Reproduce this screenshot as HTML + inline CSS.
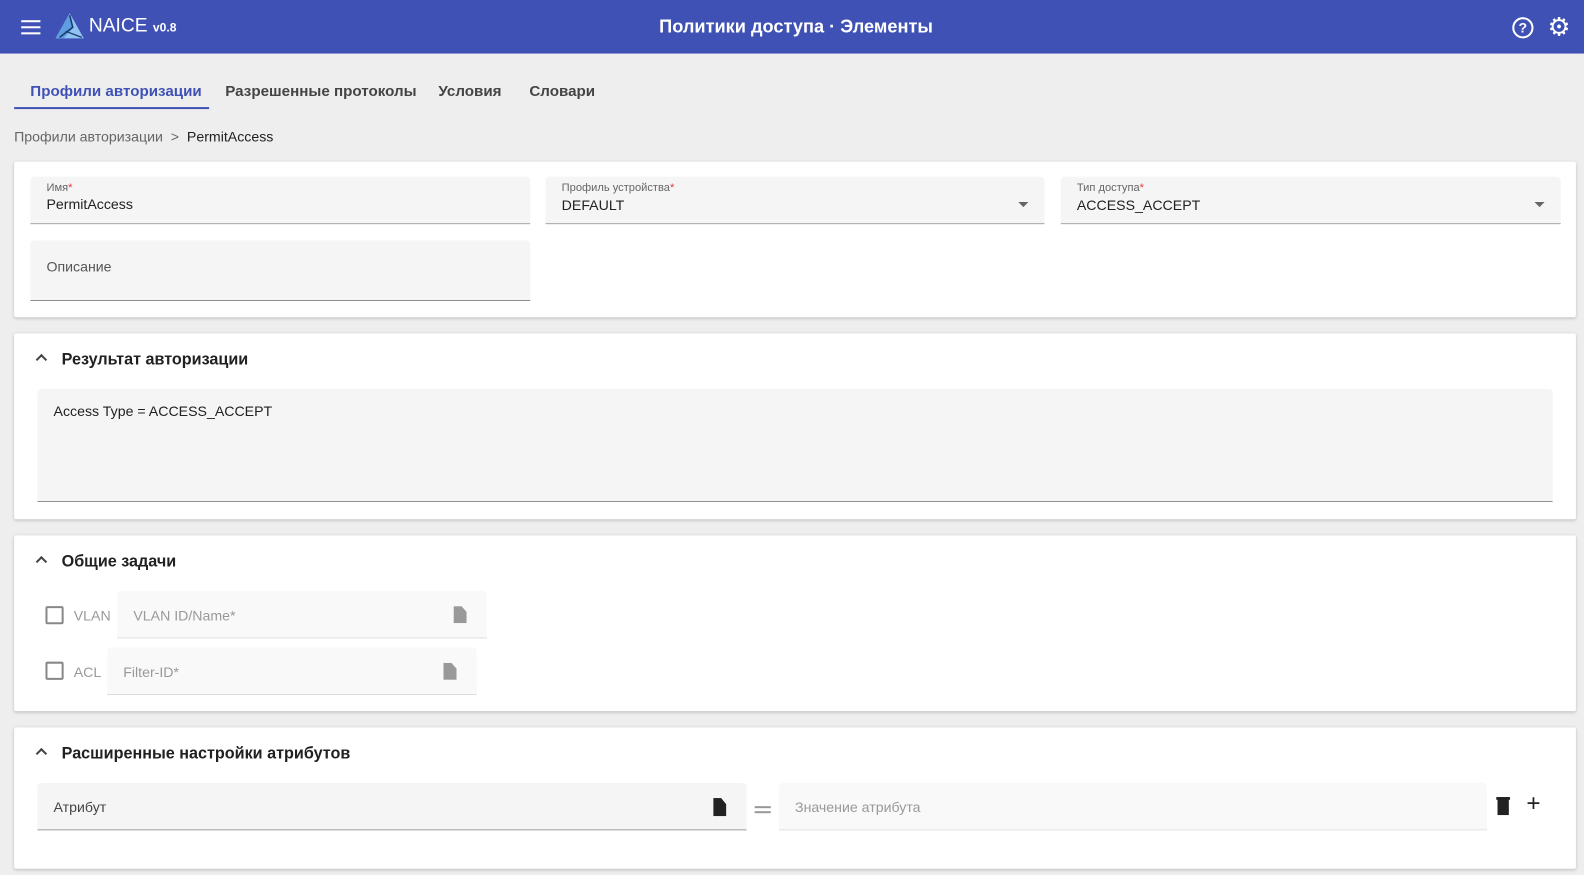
<!DOCTYPE html>
<html><head><meta charset="utf-8"><style>
*{box-sizing:border-box;margin:0;padding:0}
body{width:1584px;height:874px;overflow:hidden;background:#eeeeee;font-family:"Liberation Sans","Noto Sans CJK SC",sans-serif;color:#212121;position:relative;font-size:14px}
#w{position:absolute;left:0;top:0;width:1568px;height:866px;transform:scale(1.0102);transform-origin:0 0}
.abs{position:absolute}
.hdr{left:0;top:0;width:1568px;height:53px;background:#3f51b5;color:#fff}
.card{position:absolute;left:14px;width:1546px;background:#fff;box-shadow:0 1px 3px rgba(0,0,0,.2);border-radius:2px}
.fld{position:absolute;background:#f5f5f5;border-bottom:1px solid #8a8a8a;border-radius:4px 4px 0 0}
.lbl{position:absolute;font-size:11px;color:#666}
.req{color:#e53935}
.val{position:absolute;font-size:14px;color:#212121}
.arrow{position:absolute;width:0;height:0;border-left:5px solid transparent;border-right:5px solid transparent;border-top:5px solid #666}
.ttl{position:absolute;left:47px;font-size:16px;font-weight:bold;color:#212121}
.chev{position:absolute;left:23px;width:8px;height:8px;border-left:2px solid #444;border-top:2px solid #444;transform:rotate(45deg)}
.cb{position:absolute;width:18px;height:18px;border:2px solid #888;border-radius:2px}
.ph{position:absolute;color:#999;font-size:14px}
.tab{position:absolute;top:82px;font-size:15px;color:#444;font-weight:bold}
.doc{position:absolute;width:13px;height:17px;clip-path:polygon(0 0,60% 0,100% 35%,100% 100%,0 100%)}
</style></head><body><div id="w">
<div class="abs hdr">
 <div class="abs" style="left:21px;top:20px;width:19px;height:2px;background:#fff;box-shadow:0 6px 0 #fff,0 12px 0 #fff"></div>
 <svg class="abs" style="left:55px;top:13px" width="29" height="26" viewBox="0 0 29 26"><polygon points="14,0 28,25 0,25" fill="#8ec3f2"/><polygon points="14,0 18,14 8,25 0,25" fill="#5e9ee0"/><polyline points="14,2 17,14 4,24" stroke="#1e3a6e" stroke-width="1.5" fill="none"/><polyline points="10,18 26,24" stroke="#1e3a6e" stroke-width="1.2" fill="none"/></svg>
 <div class="abs" style="left:88px;top:15px;font-size:19px">NAICE <span style="font-size:12px;font-weight:bold">v0.8</span></div>
 <div class="abs" style="left:0;width:1576px;text-align:center;top:16px;font-size:18px;font-weight:bold">Политики доступа · Элементы</div>
 <div class="abs" style="left:1497px;top:17px;width:21px;height:21px;border:2px solid #fff;border-radius:50%;text-align:center;font-size:14px;font-weight:bold;line-height:17px">?</div>
 <div class="abs" style="left:1532px;top:15px;font-size:25px;line-height:25px">⚙</div>
</div>
<div class="tab" style="left:30px;color:#3f51b5">Профили авторизации</div>
<div class="abs" style="left:14px;top:106px;width:193px;height:2px;background:#3f51b5"></div>
<div class="tab" style="left:223px">Разрешенные протоколы</div>
<div class="tab" style="left:434px">Условия</div>
<div class="tab" style="left:524px">Словари</div>
<div class="abs" style="left:14px;top:127px;font-size:14px;color:#666">Профили авторизации &nbsp;&gt;&nbsp; <span style="color:#212121">PermitAccess</span></div>

<div class="card" style="top:160px;height:154px">
 <div class="fld" style="left:16px;top:15px;width:495px;height:47px"><div class="lbl" style="left:16px;top:5px">Имя<span class="req">*</span></div><div class="val" style="left:16px;top:19px">PermitAccess</div></div>
 <div class="fld" style="left:526px;top:15px;width:494px;height:47px"><div class="lbl" style="left:16px;top:5px">Профиль устройства<span class="req">*</span></div><div class="val" style="left:16px;top:20px">DEFAULT</div><div class="arrow" style="left:468px;top:25px"></div></div>
 <div class="fld" style="left:1036px;top:15px;width:495px;height:47px"><div class="lbl" style="left:16px;top:5px">Тип доступа<span class="req">*</span></div><div class="val" style="left:16px;top:20px">ACCESS_ACCEPT</div><div class="arrow" style="left:469px;top:25px"></div></div>
 <div class="fld" style="left:16px;top:78px;width:495px;height:60px"><div class="val" style="left:16px;top:18px;color:#555">Описание</div></div>
</div>

<div class="card" style="top:330px;height:184px">
 <div class="chev" style="top:22px"></div>
 <div class="ttl" style="top:18px">Результат авторизации</div>
 <div class="fld" style="left:23px;top:55px;width:1500px;height:112px"><div class="val" style="left:16px;top:14px">Access Type = ACCESS_ACCEPT</div></div>
</div>

<div class="card" style="top:530px;height:174px">
 <div class="chev" style="top:22px"></div>
 <div class="ttl" style="top:18px">Общие задачи</div>
 <div class="cb" style="left:31px;top:70px"></div><div class="ph" style="left:59px;top:71px">VLAN</div>
 <div class="fld" style="left:102px;top:55px;width:366px;height:47px;background:#f9f9f9;border-bottom-color:#ddd"><div class="ph" style="left:16px;top:16px">VLAN ID/Name*</div><div class="doc" style="left:333px;top:15px;background:#999"></div></div>
 <div class="cb" style="left:31px;top:125px"></div><div class="ph" style="left:59px;top:127px">ACL</div>
 <div class="fld" style="left:92px;top:111px;width:366px;height:47px;background:#f9f9f9;border-bottom-color:#ddd"><div class="ph" style="left:16px;top:16px">Filter-ID*</div><div class="doc" style="left:333px;top:15px;background:#999"></div></div>
</div>

<div class="card" style="top:720px;height:140px">
 <div class="chev" style="top:22px"></div>
 <div class="ttl" style="top:18px">Расширенные настройки атрибутов</div>
 <div class="fld" style="left:23px;top:55px;width:702px;height:47px"><div class="val" style="left:16px;top:16px;color:#444">Атрибут</div><div class="doc" style="left:669px;top:15px;background:#222;height:18px"></div></div>
 <div class="abs" style="left:733px;top:78px;width:16px;height:2px;background:#999;box-shadow:0 5px 0 #999"></div>
 <div class="fld" style="left:757px;top:55px;width:701px;height:47px;background:#f9f9f9;border-bottom-color:#ddd"><div class="ph" style="left:16px;top:16px">Значение атрибута</div></div>
 <div class="abs" style="left:1467px;top:69px;width:14px;height:18px;background:#222;border-radius:1px;clip-path:polygon(0 0,100% 0,100% 15%,90% 15%,90% 100%,10% 100%,10% 15%,0 15%)"></div>
 <div class="abs" style="left:1497px;top:64px;font-size:24px;color:#222;line-height:24px">+</div>
</div>
</div></body></html>
